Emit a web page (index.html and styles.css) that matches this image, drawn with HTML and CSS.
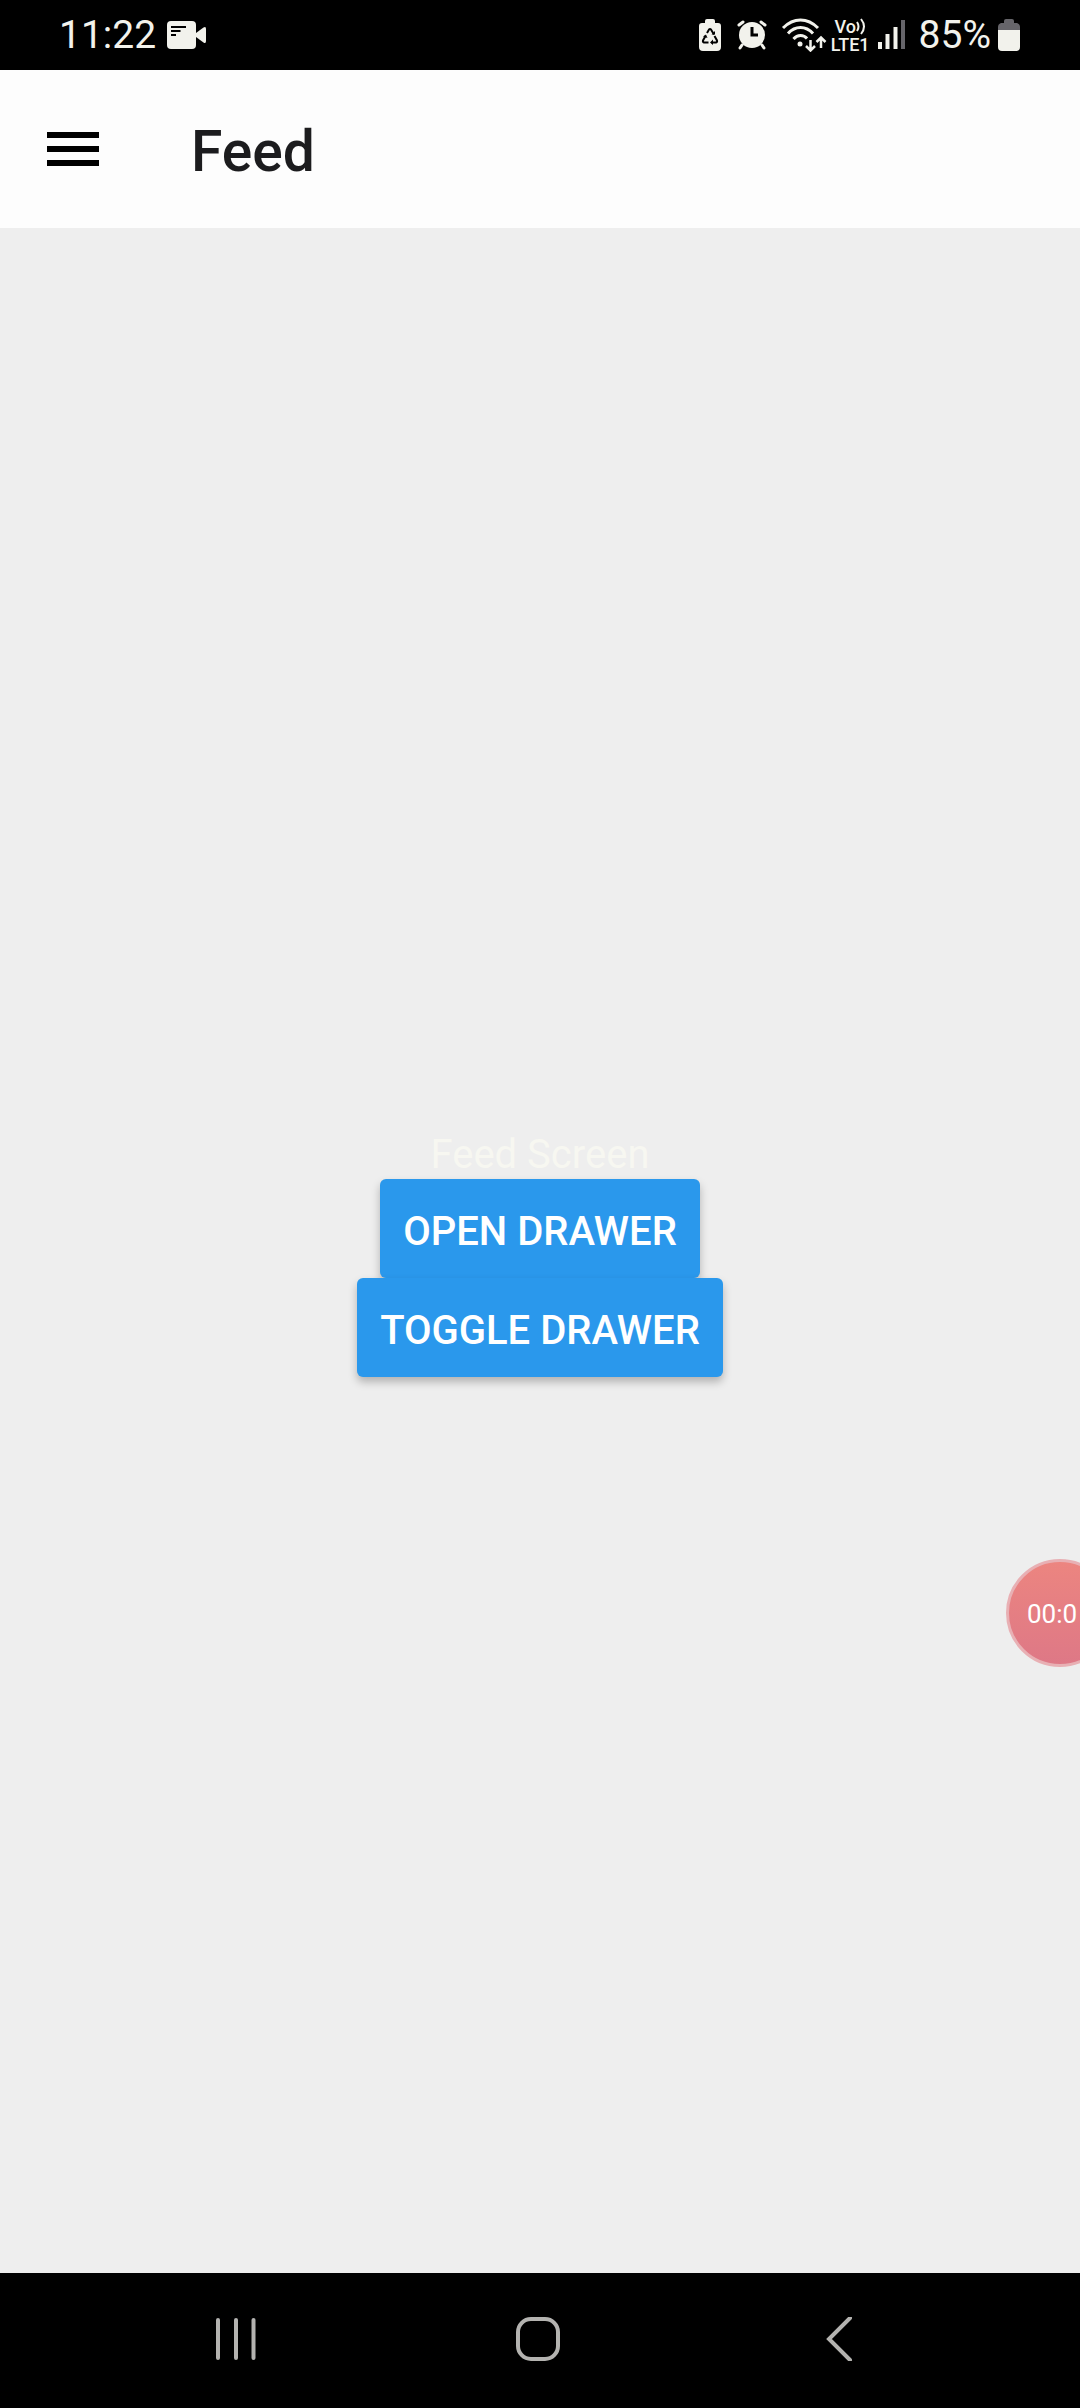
FILE: index.html
```html
<!DOCTYPE html>
<html lang="en">
<head>
<meta charset="utf-8">
<meta name="viewport" content="width=device-width, initial-scale=1">
<title>Feed</title>
<link rel="stylesheet" href="styles.css">
</head>
<body>
<div class="screen">
  <div class="status">
    <span class="status-text">11:22</span>
    <svg class="camera" width="40" height="28" viewBox="0 0 40 28" aria-hidden="true">
      <rect width="29" height="28" rx="4" fill="currentColor"/>
      <path d="M29 12 36.500 6.500Q39 5 39 8V20Q39 23 36.500 21.500L29 16Z" fill="currentColor"/>
      <path d="M4 6H19M4 10H13.500M4 14H9" stroke="#000" stroke-width="2"/>
    </svg>
    <div class="indicators">
      <svg width="22" height="32" viewBox="0 0 22 32" aria-hidden="true">
        <path d="M6 4V2Q6 0 8 0H14Q16 0 16 2V4H19Q22 4 22 7V28Q22 32 18 32H4Q0 32 0 28V7Q0 4 3 4Z" fill="currentColor"/>
        <path d="M8 14 10 10.500Q11 9.500 12 10.500L15 15.500M15.500 17 18 21.500Q18.500 23 17 23.500H12.500M9.500 23.500H5Q3.500 23 4 21.500L6.500 17" fill="none" stroke="#000" stroke-width="2"/>
        <path d="M12.500 15.500H16V12ZM14 20.500V26L11 23.500ZM4 17.500 7 15.500 8.500 19Z" fill="#000"/>
      </svg>
      <svg class="alarm" width="30" height="30" viewBox="0 0 30 30" aria-hidden="true">
        <circle cx="15" cy="15" r="13" fill="currentColor"/>
        <path d="M2 5 6 2M28 5 24 2M5 25 3 28M25 25 27 28" fill="none" stroke="currentColor" stroke-width="3" stroke-linecap="round"/>
        <path d="M15 7V15H21" fill="none" stroke="#000" stroke-width="3"/>
      </svg>
      <svg class="wifi" width="46" height="34" viewBox="0 0 46 34" aria-hidden="true">
        <g fill="none" stroke="currentColor" stroke-width="3">
          <path d="M2 10Q10 2 19.500 2T37 10M7 15.500Q12.500 9.500 19.500 9.500T32 15.500M12.500 21Q15.500 17.500 19.500 17.500T26 20.500"/>
          <path d="M29.500 22V32M25 28 29.500 32.500 34 28M40 30V20M35.500 24 40 19.500 44.500 24" stroke-width="2.500"/>
        </g>
        <circle cx="19" cy="26" r="2.500" fill="currentColor"/>
      </svg>
      <div class="volte">
        <span class="volte-row">Vo<svg width="10" height="18" viewBox="0 0 10 18" aria-hidden="true"><path d="M1 4Q4 8.500 1 13M5 1Q11 8.500 5 16" fill="none" stroke="currentColor" stroke-width="2"/></svg></span>
        <span class="volte-row">LTE1</span>
      </div>
      <svg class="signal" width="28" height="30" viewBox="0 0 28 30" aria-hidden="true">
        <g fill="none" stroke="currentColor" stroke-width="4">
          <path d="M2 22V29M9.500 14V29M17.500 7V29"/>
          <path d="M25 0V29" stroke="#66656a"/>
        </g>
      </svg>
      <span class="status-text percent">85%</span>
      <svg width="22" height="32" viewBox="0 0 22 32" aria-hidden="true">
        <path d="M6 4V2Q6 0 8 0H14Q16 0 16 2V4H19Q22 5 22 8V12H0V8Q0 5 3 4Z" fill="#66656a"/>
        <path d="M0 11H22V28Q22 32 18 32H4Q0 32 0 28Z" fill="currentColor"/>
      </svg>
    </div>
  </div>

  <header class="appbar">
    <button class="menu" type="button" aria-label="Menu">
      <svg width="52" height="36" viewBox="0 0 52 36" aria-hidden="true"><path d="M0 3H52M0 17H52M0 31H52" stroke="#000" stroke-width="6"/></svg>
    </button>
    <h1 class="title">Feed</h1>
  </header>

  <main class="content">
    <p class="caption">Feed Screen</p>
    <button class="action" type="button">OPEN DRAWER</button>
    <button class="action" type="button">TOGGLE DRAWER</button>
  </main>

  <nav class="navbar">
    <button class="nav-button" type="button" aria-label="Recent apps">
      <svg width="44" height="44" viewBox="0 0 44 44" aria-hidden="true"><path d="M4 3V41M22 3V41M39.500 3V41" fill="none" stroke="currentColor" stroke-width="4" stroke-linecap="round"/></svg>
    </button>
    <button class="nav-button" type="button" aria-label="Home">
      <svg width="44" height="44" viewBox="0 0 44 44" aria-hidden="true"><rect x="2" y="2" width="40" height="40" rx="13" fill="none" stroke="currentColor" stroke-width="4"/></svg>
    </button>
    <button class="nav-button" type="button" aria-label="Back">
      <svg width="44" height="44" viewBox="0 0 44 44" aria-hidden="true"><path d="M32 1 11 22 32 43" fill="none" stroke="currentColor" stroke-width="4" stroke-linecap="round"/></svg>
    </button>
  </nav>

  <div class="recorder">00:0</div>
</div>
</body>
</html>
```
FILE: styles.css
```css
* {
  box-sizing: border-box;
}

body {
  margin: 0;
  font-family: Roboto, "Liberation Sans", sans-serif;
}

button {
  margin: 0;
  padding: 0;
  border: 0;
  background: none;
  font: inherit;
  color: inherit;
}

svg {
  display: block;
  flex: none;
}

.screen {
  position: relative;
  display: flex;
  flex-direction: column;
  min-height: 100vh;
  overflow: hidden;
  background: #eeeeee;
}

.status {
  display: flex;
  align-items: center;
  height: 70px;
  padding: 0 60px 0 59px;
  background: #000;
  color: #f2f2ec;
}

.status-text {
  font-size: 39px;
  line-height: 48px;
}

.camera {
  margin-left: 11px;
}

.indicators {
  display: flex;
  align-items: center;
  margin-left: auto;
}

.alarm {
  margin-left: 16px;
}

.wifi {
  margin-left: 14px;
}

.volte {
  display: flex;
  flex-direction: column;
  margin-left: 4px;
  font-size: 18px;
  font-weight: 500;
  line-height: 17px;
}

.volte-row {
  display: flex;
  justify-content: center;
}

.signal {
  margin-left: 8px;
}

.percent {
  margin: 0 7px 0 13px;
}

.appbar {
  display: flex;
  align-items: center;
  gap: 92px;
  height: 158px;
  padding: 2px 47px 0;
  background: #fdfdfd;
}

.title {
  margin: 0;
  padding-top: 4px;
  font-size: 57px;
  font-weight: 500;
  line-height: 68px;
  color: #1c1c1e;
}

.content {
  flex: 1;
  display: flex;
  flex-direction: column;
  align-items: center;
  justify-content: center;
}

.caption {
  margin: 0;
  padding-top: 6px;
  font-size: 40px;
  line-height: 48px;
  color: #f7f7f1;
}

.action {
  height: 99px;
  padding: 6px 23px 0;
  border-radius: 6px;
  background: #2a98ec;
  box-shadow: 0 5px 8px rgba(0, 0, 0, 0.25);
  font-size: 40px;
  font-weight: 500;
  color: #fff;
}

.navbar {
  display: flex;
  align-items: center;
  justify-content: center;
  gap: 258px;
  height: 135px;
  padding: 0 4px 4px 0;
  background: #000;
  color: #b4b3b0;
}

.recorder {
  position: absolute;
  top: 1559px;
  right: -34px;
  width: 108px;
  height: 108px;
  padding-left: 18px;
  border: 3px solid #e8b0b4;
  border-radius: 50%;
  background: linear-gradient(#ec8580, #de7886);
  font-size: 26px;
  line-height: 104px;
  color: #fff;
}
```
